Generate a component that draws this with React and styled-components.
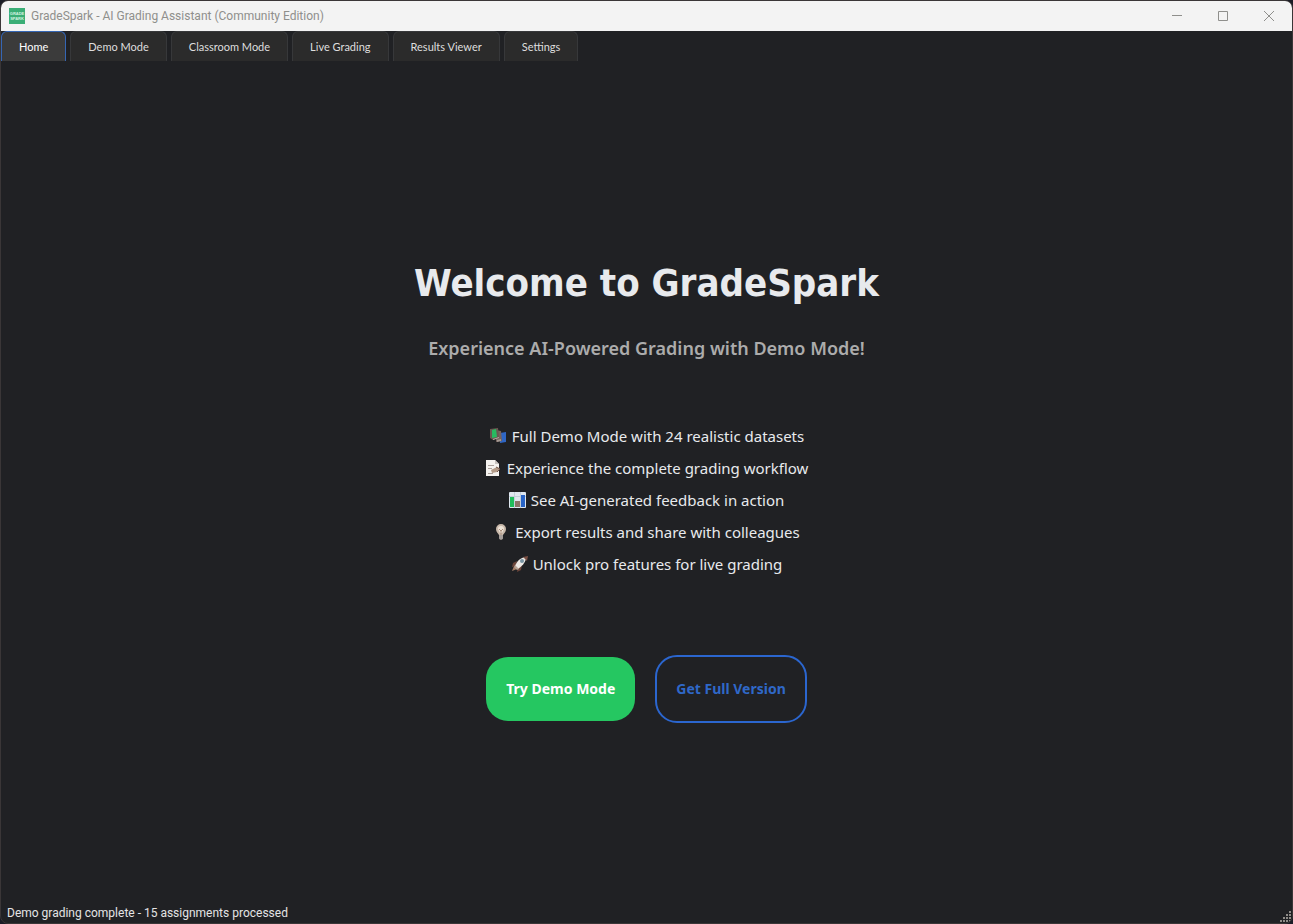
import React, { useState } from 'react';
import styled, { createGlobalStyle } from 'styled-components';

const GlobalStyle = createGlobalStyle`
  * { box-sizing: border-box; }
  body { margin: 0; background: #1b1c26; font-family: "Noto Sans", "Open Sans", sans-serif; }
  button { font-family: inherit; cursor: pointer; }
`;

const Window = styled.div`
  min-height: 100vh;
  display: flex;
  flex-direction: column;
  background: #202124;
  border: 1px solid #3a3637;
  border-radius: 8px;
  overflow: hidden;
`;

const TitleBar = styled.header`
  display: flex;
  align-items: center;
  height: 30px;
  padding-left: 8px;
  background: #f3f3f3;
`;

const AppTitle = styled.span`
  flex: 1;
  margin-left: 6px;
  font-family: Roboto, sans-serif;
  font-size: 12px;
  line-height: 16px;
  color: #8f8f8c;
`;

const WindowButton = styled.button`
  display: grid;
  place-items: center;
  width: 46px;
  height: 30px;
  padding: 0;
  border: 0;
  background: transparent;
`;

const TabBar = styled.nav`
  display: flex;
  gap: 4px;
`;

const Tab = styled.button`
  height: 30px;
  padding: 0 17px;
  border: 1px solid ${(p) => (p.$active ? '#3566b4' : '#37383a')};
  border-bottom: 0;
  border-radius: 6px 6px 0 0;
  background: ${(p) => (p.$active ? '#3b3b3b' : '#2b2b2b')};
  color: ${(p) => (p.$active ? '#ffffff' : '#dedede')};
  font-family: Lato, sans-serif;
  font-size: 11px;
  line-height: 16px;
`;

const Main = styled.main`
  flex: 1;
  display: flex;
  flex-direction: column;
  align-items: center;
  justify-content: center;
  padding-top: 14px;
  text-align: center;
`;

const Heading = styled.h1`
  margin: 0;
  font-family: "DejaVu Sans Condensed", "Noto Sans", sans-serif;
  font-size: 38px;
  line-height: 54px;
  font-weight: 700;
  color: #e8eaed;
`;

const Subheading = styled.h2`
  margin: 26px 0 0;
  font-family: "Noto Sans", sans-serif;
  font-size: 18px;
  line-height: 24px;
  font-weight: 600;
  color: #acacac;
`;

const Features = styled.ul`
  margin: 60px 0 0;
  padding: 0;
  list-style: none;
`;

const Feature = styled.li`
  display: flex;
  align-items: center;
  justify-content: center;
  gap: 5px;
  font-size: 15px;
  line-height: 32px;
  color: #e8eaed;
`;

const Actions = styled.div`
  display: flex;
  align-items: center;
  gap: 20px;
  margin-top: 75px;
`;

const Action = styled.button`
  height: ${(p) => (p.$outline ? 68 : 64)}px;
  padding: 0 ${(p) => (p.$outline ? 19 : 20)}px;
  border: ${(p) => (p.$outline ? '2px solid #2b66cf' : '0')};
  border-radius: 22px;
  background: ${(p) => (p.$outline ? 'transparent' : '#25c761')};
  color: ${(p) => (p.$outline ? '#2f68c8' : '#ffffff')};
  font-size: 14px;
  line-height: 20px;
  font-weight: 700;
`;

const StatusBar = styled.footer`
  display: flex;
  align-items: flex-end;
  justify-content: space-between;
  padding-left: 6px;
  font-family: Roboto, sans-serif;
  font-size: 12px;
  line-height: 20px;
  color: #e4e4e4;
`;

const Logo = () => (
  <svg width="16" height="16" viewBox="0 0 16 16" aria-hidden="true">
    <rect width="16" height="16" fill="#3aae76" />
    <g fill="#d5f3e2" fontFamily="Liberation Sans, sans-serif" fontWeight="700" fontSize="4" textAnchor="middle">
      <text x="8" y="7">GRADE</text>
      <text x="8" y="12">SPARK</text>
    </g>
  </svg>
);

const BooksIcon = () => (
  <svg width="18" height="16" viewBox="0 0 18 16" aria-hidden="true">
    <path d="M11 5l6-1v10l-6 1z" fill="#2f66c5" />
    <path d="M7 2l5 1 1 10-6 1z" fill="#76635d" />
    <path d="M8 12l4-1v2l-4 1z" fill="#a39993" />
    <path d="M1 1l8-1 1 10-6 2-3-2z" fill="#6a5751" />
    <path d="M3 2l4-1 1 8-5 1z" fill="#27ba60" />
    <path d="M4 11l6-2v1l-6 2z" fill="#b5aca6" />
  </svg>
);

const MemoIcon = () => (
  <svg width="17" height="16" viewBox="0 0 17 16" aria-hidden="true">
    <path d="M1 0h9l4 4v12H1z" fill="#f4f2ef" />
    <path d="M10 0l4 4h-4z" fill="#c9c4c0" />
    <path d="M3 5.5h6M3 8.5h4M3 13.5h5" stroke="#aaa09a" />
    <path d="M6 10l6-3 3 2-3 3-5 1z" fill="#b39b88" />
    <path d="M11 7l4 2-3 3" stroke="#76584c" fill="none" />
  </svg>
);

const ChartIcon = () => (
  <svg width="17" height="16" viewBox="0 0 17 16" aria-hidden="true">
    <rect width="17" height="16" rx="1" fill="#dfe7ef" />
    <path d="M0 4.5h17M5.5 0v16M11.5 0v16" stroke="#c3cfda" />
    <rect x="1" y="5" width="4" height="10" fill="#20bd5b" />
    <rect x="6" y="9" width="5" height="6" fill="#8b7468" />
    <rect x="12" y="3" width="4" height="12" fill="#2864c7" />
  </svg>
);

const BulbIcon = () => (
  <svg width="17" height="16" viewBox="0 0 17 16" aria-hidden="true">
    <path d="M3 5a5 5 0 0 1 10 0c0 3-2 4-3 6H6C5 9 3 8 3 5z" fill="#c8b8aa" />
    <path d="M5 5a3 3 0 0 1 6 0L9 9H7z" fill="#eee4d8" />
    <path d="M6 5l2 2 2-2M8 6v5" fill="none" stroke="#a98e7d" />
    <path d="M6 11h4v3l-1 2H7l-1-2z" fill="#837b77" />
    <path d="M6 12h4M6 14h4" stroke="#c5c1bd" />
  </svg>
);

const RocketIcon = () => (
  <svg width="17" height="16" viewBox="0 0 17 16" aria-hidden="true">
    <path d="M1 15l2-5 3 3z" fill="#a27e68" />
    <path d="M6 5L2 7l-1 4 4-1zM11 9l-1 5-4 2 1-5z" fill="#6b453a" />
    <path d="M4 10C6 5 9 2 14 1l1 2c-1 4-4 7-8 10z" fill="#ece8e4" />
    <path d="M12 1l5-1-1 5z" fill="#7b5145" />
    <path d="M4 9l4 4-2 1-3-3z" fill="#b8a395" />
    <circle cx="11" cy="5" r="2" fill="#7893a2" />
  </svg>
);

const Grip = () => (
  <svg width="12" height="12" viewBox="0 0 12 12" fill="#8f8c88" aria-hidden="true">
    {[[9, 0], [6, 3], [9, 3], [3, 6], [6, 6], [9, 6], [0, 9], [3, 9], [6, 9], [9, 9]].map(([x, y]) => (
      <rect key={`${x}-${y}`} x={x} y={y} width="2" height="2" />
    ))}
  </svg>
);

const windowControls = [
  ['Minimize', 'M0 4.5h10'],
  ['Maximize', 'M.5 .5h9v9h-9z'],
  ['Close', 'M0 0l10 10M10 0L0 10'],
];

const tabs = ['Home', 'Demo Mode', 'Classroom Mode', 'Live Grading', 'Results Viewer', 'Settings'];

const features = [
  [BooksIcon, 'Full Demo Mode with 24 realistic datasets'],
  [MemoIcon, 'Experience the complete grading workflow'],
  [ChartIcon, 'See AI-generated feedback in action'],
  [BulbIcon, 'Export results and share with colleagues'],
  [RocketIcon, 'Unlock pro features for live grading'],
];

export default function App() {
  const [active, setActive] = useState('Home');
  return (
    <Window>
      <GlobalStyle />
      <TitleBar>
        <Logo />
        <AppTitle>GradeSpark - AI Grading Assistant (Community Edition)</AppTitle>
        {windowControls.map(([label, path]) => (
          <WindowButton key={label} aria-label={label}>
            <svg width="10" height="10" viewBox="0 0 10 10" fill="none" stroke="#8f8f8c" aria-hidden="true">
              <path d={path} />
            </svg>
          </WindowButton>
        ))}
      </TitleBar>
      <TabBar>
        {tabs.map((name) => (
          <Tab key={name} $active={name === active} onClick={() => setActive(name)}>
            {name}
          </Tab>
        ))}
      </TabBar>
      <Main>
        <Heading>Welcome to GradeSpark</Heading>
        <Subheading>Experience AI-Powered Grading with Demo Mode!</Subheading>
        <Features>
          {features.map(([Icon, text]) => (
            <Feature key={text}>
              <Icon />
              <span>{text}</span>
            </Feature>
          ))}
        </Features>
        <Actions>
          <Action>Try Demo Mode</Action>
          <Action $outline>Get Full Version</Action>
        </Actions>
      </Main>
      <StatusBar>
        <span>Demo grading complete - 15 assignments processed</span>
        <Grip />
      </StatusBar>
    </Window>
  );
}
